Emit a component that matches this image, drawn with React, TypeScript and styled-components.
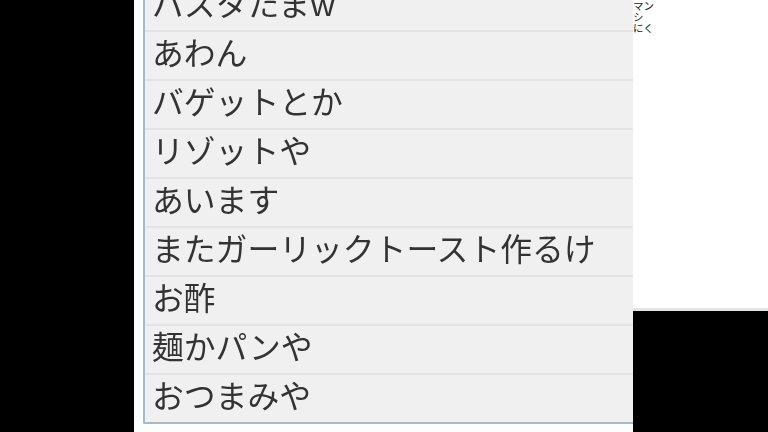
import React from "react";
import styled, { createGlobalStyle } from "styled-components";

const Global = createGlobalStyle`
  html, body { margin: 0; padding: 0; background: #000; }
  #root { width: 768px; height: 432px; overflow: hidden; }
`;

const Page = styled.div`
  display: grid;
  grid-template-columns: 134px 499px 135px;
  width: 768px;
  height: 432px;
  overflow: hidden;
  background: #000;
  font-family: "Noto Sans CJK JP", "Noto Sans", sans-serif;
`;

const Gutter = styled.div`
  background: #000;
`;

const Center = styled.main`
  background: #fcfdfd;
  padding-left: 9px;
  overflow: hidden;
`;

const List = styled.ul`
  list-style: none;
  margin: -17px 0 0;
  padding: 0;
  background: #f0f0f0;
  border-left: 2px solid #a5b9cd;
  border-bottom: 2px solid #a5b9cd;
  border-radius: 0 0 0 2px;
`;

const Row = styled.li`
  box-sizing: border-box;
  height: 49px;
  padding-left: 7px;
  border-bottom: 2px solid #e3e3e3;
  color: #333;
  font-size: 31.8px;
  font-weight: 400;
  line-height: 39px;
  white-space: nowrap;
  filter: blur(0.3px);
  &:last-child { border-bottom: 0; height: 47px; }
`;

const Side = styled.aside`
  display: flex;
  flex-direction: column;
`;

const Note = styled.div`
  height: 308px;
  background: #fff;
  border-bottom: 3px solid #e4e4e4;
  color: #222;
  font-size: 10.5px;
  line-height: 11px;
`;

const Dark = styled.div`
  flex: 1;
  background: #000;
`;

const rows = [
  "パスタたまw",
  "あわん",
  "バゲットとか",
  "リゾットや",
  "あいます",
  "またガーリックトースト作るけ",
  "お酢",
  "麺かパンや",
  "おつまみや",
];

export default function App() {
  return (
    <Page>
      <Global />
      <Gutter />
      <Center>
        <List>
          {rows.map((r) => (
            <Row key={r}>{r}</Row>
          ))}
        </List>
      </Center>
      <Side>
        <Note>
          マン
          <br />
          シ
          <br />
          にく
        </Note>
        <Dark />
      </Side>
    </Page>
  );
}
